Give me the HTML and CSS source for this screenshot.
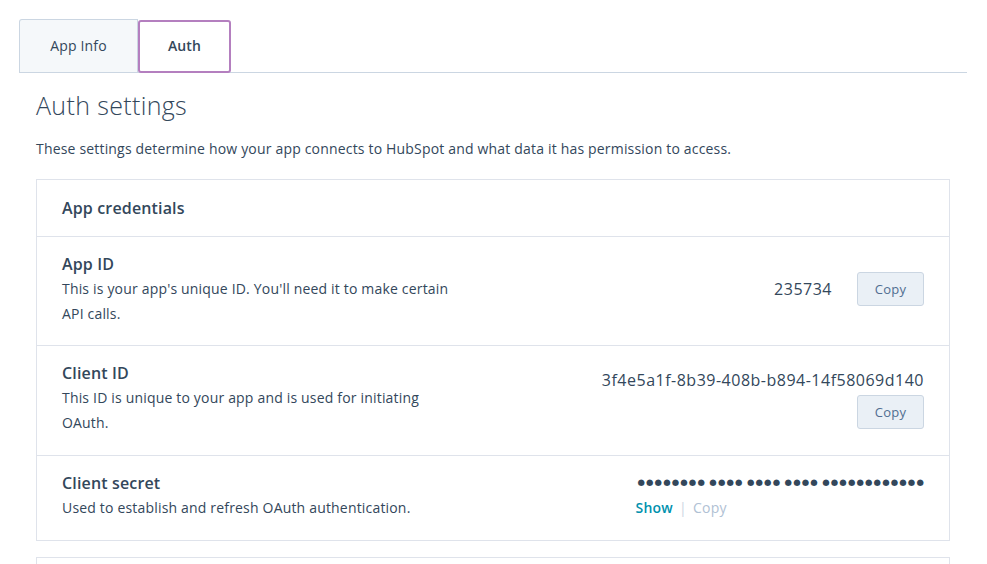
FILE: index.html
```html
<!DOCTYPE html>
<html>
<head>
<meta charset="utf-8">
<link rel="stylesheet" href="styles.css">
</head>
<body>
<div class="page">
  <div class="tabs">
    <div class="tab">App Info</div>
    <div class="tab tab-active">Auth</div>
  </div>
  <div class="content">
    <h1 class="title">Auth settings</h1>
    <p class="intro">These settings determine how your app connects to HubSpot and what data it has permission to access.</p>
    <div class="card">
      <div class="card-head">App credentials</div>
      <div class="row">
        <div class="row-left">
          <div class="row-title">App ID</div>
          <div class="row-desc">This is your app's unique ID. You'll need it to make certain API calls.</div>
        </div>
        <div class="row-right inline">
          <span class="value">235734</span>
          <button class="btn">Copy</button>
        </div>
      </div>
      <div class="row">
        <div class="row-left">
          <div class="row-title">Client ID</div>
          <div class="row-desc">This ID is unique to your app and is used for initiating OAuth.</div>
        </div>
        <div class="row-right stack">
          <span class="value">3f4e5a1f-8b39-408b-b894-14f58069d140</span>
          <button class="btn">Copy</button>
        </div>
      </div>
      <div class="row">
        <div class="row-left">
          <div class="row-title">Client secret</div>
          <div class="row-desc">Used to establish and refresh OAuth authentication.</div>
        </div>
        <div class="row-right stack secret">
          <span class="dots">●●●●●●●● ●●●● ●●●● ●●●● ●●●●●●●●●●●●</span>
          <div class="links"><a class="link">Show</a><span class="sep">|</span><span class="link-disabled">Copy</span></div>
        </div>
      </div>
    </div>
    <div class="card card-next"></div>
  </div>
</div>
</body>
</html>
```

FILE: styles.css
```css
* { box-sizing: border-box; }
html, body { margin: 0; padding: 0; background: #fff; }
body {
  font-family: "Open Sans", Lato, sans-serif;
  color: #33475b;
  -webkit-font-smoothing: antialiased;
}
.page { padding: 20px 20px 0 19px; }
.tabs {
  display: flex;
  align-items: flex-end;
  border-bottom: 1px solid #cbd6e2;
  width: 948px;
  height: 53px;
}
.tab {
  height: 53px;
  display: flex;
  align-items: center;
  justify-content: center;
  font-size: 14px;
  letter-spacing: 0.15px;
  padding-bottom: 2px;
}
.tab:first-child {
  width: 119px;
  background: #f5f8fa;
  border: 1px solid #cbd6e2;
  border-bottom: none;
  border-radius: 3px 0 0 0;
}
.tab-active {
  width: 93px;
  border: 2px solid #b47fbf;
  border-radius: 3px;
  font-weight: 600;
  margin-bottom: -1px;
  height: 53px;
}
.content { padding-left: 17px; width: 931px; }
.title {
  font-size: 25px;
  font-weight: 300;
  margin: 16px 0 0 0;
  line-height: 32px;
  letter-spacing: 0.35px;
}
.intro {
  font-size: 14px;
  margin: 16px 0 0 0;
  line-height: 24px;
  letter-spacing: 0.18px;
}
.card {
  margin-top: 18px;
  border: 1px solid #dfe3eb;
  width: 914px;
}
.card-head {
  font-size: 16px;
  font-weight: 600;
  padding: 16px 25px 16px;
  line-height: 24px;
  letter-spacing: 0.15px;
  border-bottom: 1px solid #dfe3eb;
}
.row {
  display: flex;
  justify-content: space-between;
  align-items: center;
  padding: 15px 25px 19px;
  border-bottom: 1px solid #dfe3eb;
}
.row + .row { padding-bottom: 20px; }
.row:last-child { border-bottom: none; }
.row-left { width: 395px; }
.row-title {
  font-size: 16px;
  font-weight: 600;
  line-height: 24px;
  letter-spacing: 0.15px;
}
.row-desc {
  font-size: 14px;
  line-height: 25px;
  letter-spacing: 0.18px;
}
.row-right { display: flex; }
.row-right.inline { align-items: center; gap: 25px; }
.row-right.stack { flex-direction: column; align-items: flex-end; gap: 3px; }
.row-right.secret { align-items: flex-start; gap: 3px; }
.value { font-size: 16px; line-height: 24px; letter-spacing: 0.5px; }
.btn {
  font-family: inherit;
  font-size: 13px;
  letter-spacing: 0.2px;
  color: #506e91;
  background: #eaf0f6;
  border: 1px solid #cbd6e2;
  border-radius: 3px;
  width: 67px;
  height: 34px;
  padding: 0;
}
.dots {
  font-family: "DejaVu Sans", sans-serif;
  font-size: 8.5px;
  line-height: 22px;
  letter-spacing: 1.15px;
  word-spacing: -0.5px;
  color: #33475b;
  margin-right: -1px;
}
.links { font-size: 14px; line-height: 24px; letter-spacing: 0.25px; display: flex; align-items: center; margin-left: -2px; }
.link { color: #0091ae; font-weight: 600; }
.sep { color: #cbd6e2; margin: 0 6px; }
.link-disabled { color: #b0c1d4; }
.card-next { margin-top: 16px; height: 20px; border-bottom: none; }
```
